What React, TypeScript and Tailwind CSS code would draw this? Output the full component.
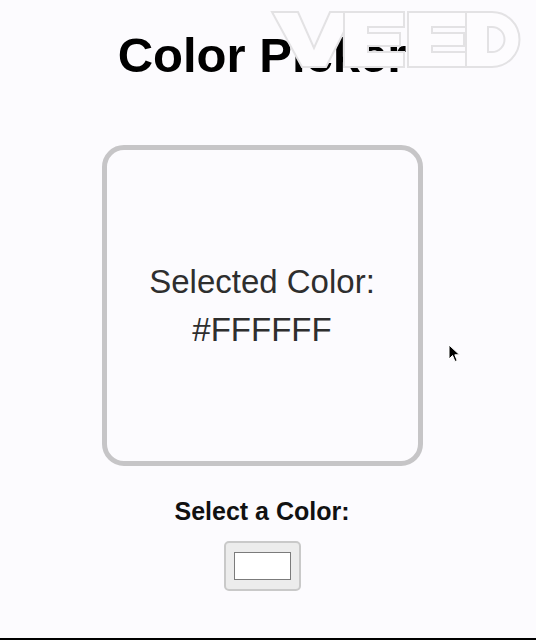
import React from "react";

function VeedLogo() {
  return (
    <svg
      className="absolute left-[268px] top-[8px]"
      width="258"
      height="64"
      viewBox="268 8 258 64"
      fill="#fdfcfe"
      stroke="#e3e2e4"
      strokeWidth="2"
    >
      <path d="M272 12 H298 L314 48 L330 12 H354 L326 67 H302 Z" />
      <path d="M344 12 H404 V27 H368 V33 H400 V46 H368 V52 H404 V67 H344 Z" />
      <path d="M408 12 H468 V27 H432 V33 H464 V46 H432 V52 H468 V67 H408 Z" />
      <path
        fillRule="evenodd"
        d="M466 12 H492 A27.5 27.5 0 0 1 492 67 H466 Z M488 27 H492 A12.5 12.5 0 0 1 492 52 H488 Z"
      />
    </svg>
  );
}

function Cursor() {
  return (
    <svg className="absolute left-[448px] top-[344px]" width="14" height="20" viewBox="0 0 14 20">
      <path d="M1 1 L1 15 L4.5 11.5 L7 17.5 L9.2 16.6 L6.8 10.8 L11.5 10.8 Z" fill="#000" stroke="#fff" strokeWidth="1" />
    </svg>
  );
}

export default function App() {
  return (
    <div
      className="relative w-[536px] h-[640px] bg-[#fcfbfe] border-b-2 border-black overflow-hidden"
      style={{ fontFamily: '"Liberation Sans", Arial, sans-serif' }}
    >
      <div className="w-[524px] flex flex-col items-center">
        <h1 className="mt-[27px] text-[49px] leading-[56px] font-bold text-black">Color Picker</h1>
        <div className="mt-[62px] w-[321px] h-[321px] rounded-[22px] border-[5px] border-[#c6c5c7] flex flex-col items-center justify-center text-[33px] leading-[48px] text-[#2e2e2e]">
          <div>Selected Color:</div>
          <div>#FFFFFF</div>
        </div>
        <div className="mt-[31px] text-[25px] leading-[28px] font-bold text-[#111]">Select a Color:</div>
        <div className="mt-[16px] w-[77px] h-[50px] rounded-[5px] border-2 border-[#c9c9c9] bg-[#ececec] flex items-center justify-center">
          <div className="w-[57px] h-[28px] border border-[#7b7b7b] bg-white" />
        </div>
      </div>
      <VeedLogo />
      <Cursor />
    </div>
  );
}
